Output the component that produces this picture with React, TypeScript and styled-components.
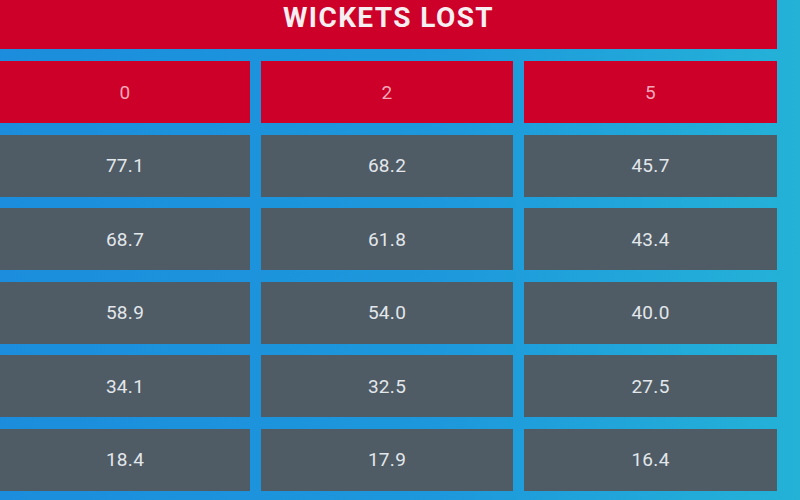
import React from "react";
import styled, { createGlobalStyle } from "styled-components";

const GlobalStyle = createGlobalStyle`
  html, body {
    margin: 0;
    padding: 0;
    width: 800px;
    height: 500px;
    overflow: hidden;
  }
  body {
    font-family: Roboto, "Liberation Sans", sans-serif;
  }
`;

const Stage = styled.div`
  width: 800px;
  height: 500px;
  background: linear-gradient(90deg, #1b8ddc 0%, #1d98dc 55%, #24b2d7 100%);
  display: flex;
  flex-direction: column;
  gap: 12px;
`;

const Banner = styled.div`
  width: 777px;
  height: 49px;
  box-sizing: border-box;
  padding-top: 4px;
  background: #cc0028;
  color: #f6eef0;
  font-size: 28px;
  line-height: 28px;
  font-weight: 700;
  letter-spacing: 1.4px;
  text-align: center;
`;

const Table = styled.div`
  display: grid;
  grid-template-columns: 250px 252px 253px;
  grid-auto-rows: 62px;
  column-gap: 11px;
  row-gap: 11.6px;
  width: 777px;
`;

const Cell = styled.div<{ $head?: boolean }>`
  display: flex;
  align-items: center;
  justify-content: center;
  background: ${({ $head }) => ($head ? "#cc0028" : "#4f5b65")};
  color: ${({ $head }) => ($head ? "#f2a8b8" : "#e2e7eb")};
  font-size: 19px;
  font-weight: 400;
  letter-spacing: 0.3px;
`;

const heads = ["0", "2", "5"];

const rows = [
  ["77.1", "68.2", "45.7"],
  ["68.7", "61.8", "43.4"],
  ["58.9", "54.0", "40.0"],
  ["34.1", "32.5", "27.5"],
  ["18.4", "17.9", "16.4"],
];

export default function App() {
  return (
    <>
      <GlobalStyle />
      <Stage>
        <Banner>WICKETS LOST</Banner>
        <Table>
          {heads.map((h) => (
            <Cell key={h} $head>
              {h}
            </Cell>
          ))}
          {rows.map((r, i) =>
            r.map((v, j) => <Cell key={`${i}-${j}`}>{v}</Cell>)
          )}
        </Table>
      </Stage>
    </>
  );
}
